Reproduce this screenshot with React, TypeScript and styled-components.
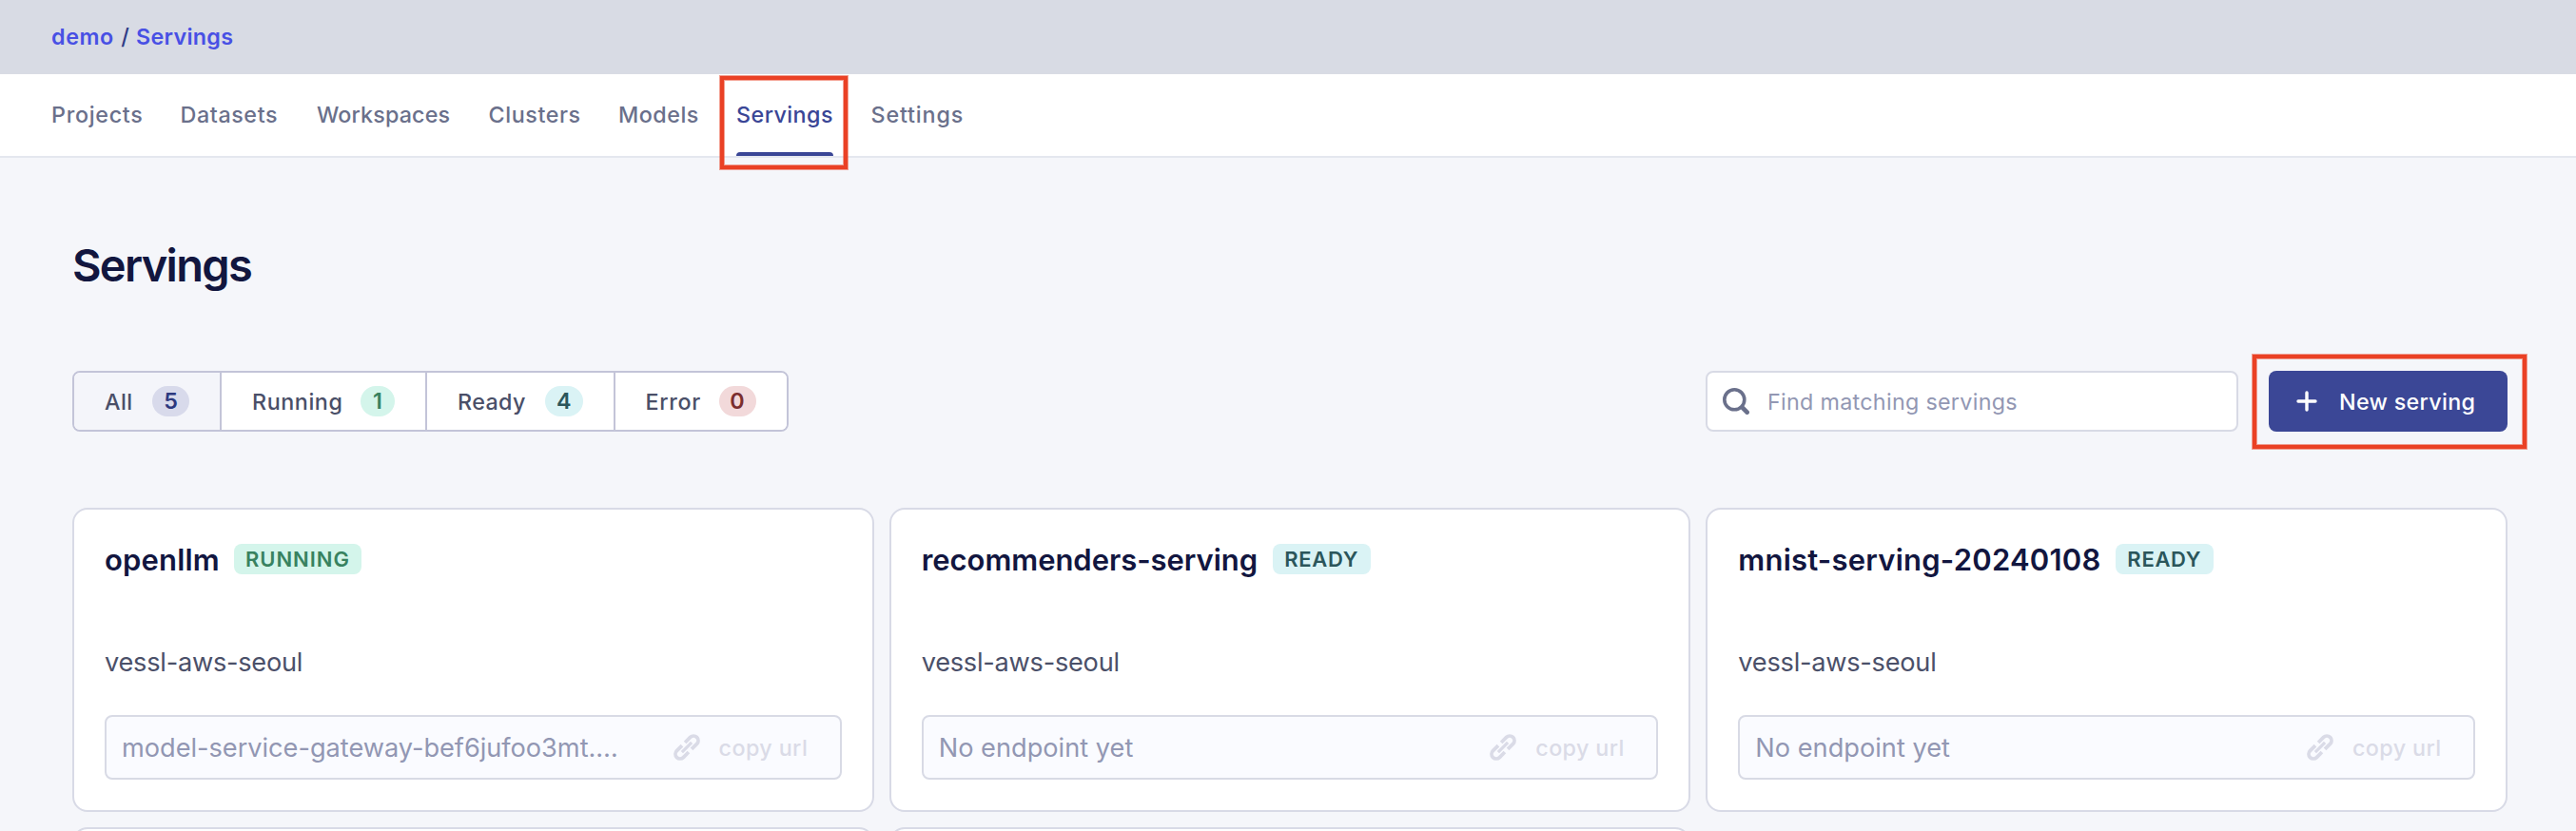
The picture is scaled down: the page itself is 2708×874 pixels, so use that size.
import React from "react";
import styled, { createGlobalStyle } from "styled-components";

const GlobalStyle = createGlobalStyle`
  * { box-sizing: border-box; }
  body {
    margin: 0;
    background: #f5f6fa;
    font-family: Inter, "Liberation Sans", sans-serif;
    -webkit-font-smoothing: antialiased;
  }
`;

const Page = styled.div`
  height: 874px;
  overflow: hidden;
  display: flex;
  flex-direction: column;
  font-size: 23.3px;
  white-space: nowrap;
`;

const Breadcrumb = styled.header`
  height: 78px;
  flex: none;
  display: flex;
  align-items: center;
  padding: 0 0 2px 54px;
  background: #d8dbe4;
  color: #2f3c86;
  font-weight: 500;
`;

const Crumb = styled.a<{ $spacing: number; $width: number }>`
  width: ${(p) => p.$width}px;
  color: #4850e4;
  font-weight: 600;
  letter-spacing: ${(p) => p.$spacing}px;
`;

const Slash = styled.span`
  width: 23px;
  text-align: center;
`;

const Nav = styled.nav`
  height: 88px;
  flex: none;
  display: flex;
  gap: 40px;
  padding-left: 54px;
  background: #ffffff;
  border-bottom: 2px solid #e4e7ef;
`;

const NavItem = styled.a<{ $width: number; $spacing: number; $active?: boolean }>`
  position: relative;
  width: ${(p) => p.$width}px;
  display: flex;
  align-items: center;
  padding-top: 2px;
  border-bottom: 4px solid transparent;
  font-weight: 500;
  letter-spacing: ${(p) => p.$spacing}px;
  color: ${(p) => (p.$active ? "#3a4696" : "#6a708b")};
`;

const Underline = styled.span`
  position: absolute;
  left: 0;
  right: 0;
  bottom: -4px;
  height: 4px;
  border-radius: 4px 4px 0 0;
  background: #3a4696;
`;

const Highlight = styled.span<{ $left: number; $top: number; $width: number; $height: number }>`
  position: absolute;
  z-index: 2;
  left: ${(p) => p.$left}px;
  top: ${(p) => p.$top}px;
  width: ${(p) => p.$width}px;
  height: ${(p) => p.$height}px;
  border: 4px solid #ea4125;
  box-shadow: 0 0 0 1px rgba(234, 65, 37, 0.5), inset 0 0 0 1px rgba(234, 65, 37, 0.5);
  pointer-events: none;
`;

const Main = styled.main`
  flex: 1;
  padding: 83px 72px 0 76px;
`;

const Title = styled.h1`
  margin: 0 0 81px;
  font-size: 47px;
  line-height: 60px;
  font-weight: 600;
  letter-spacing: -1.7px;
  color: #12163f;
`;

const Toolbar = styled.div`
  display: flex;
  justify-content: space-between;
  height: 64px;
  margin-bottom: 80px;
`;

const Filters = styled.div`
  display: flex;
  overflow: hidden;
  border: 2px solid #c3c4d8;
  border-radius: 8px;
  background: #ffffff;
`;

const Filter = styled.button<{ $width: number; $spacing: number; $selected?: boolean }>`
  width: ${(p) => p.$width}px;
  display: flex;
  align-items: center;
  justify-content: space-between;
  padding: 0 32px;
  border: 0;
  background: ${(p) => (p.$selected ? "#f4f5fa" : "#ffffff")};
  color: #4a4f68;
  font: inherit;
  font-weight: 500;
  letter-spacing: ${(p) => p.$spacing}px;

  & + & {
    border-left: 2px solid #c3c4d8;
  }
`;

const Count = styled.span<{ $width: number; $bg: string; $color: string }>`
  width: ${(p) => p.$width}px;
  height: 32px;
  border-radius: 16px;
  line-height: 32px;
  text-align: center;
  letter-spacing: 0;
  font-weight: 600;
  background: ${(p) => p.$bg};
  color: ${(p) => p.$color};
`;

const Actions = styled.div`
  display: flex;
  gap: 32px;
`;

const Search = styled.label`
  width: 560px;
  display: flex;
  align-items: center;
  gap: 19px;
  padding-left: 16px;
  border: 2px solid #d8dae5;
  border-radius: 8px;
  background: #ffffff;
  color: #9297b3;
  letter-spacing: 0.3px;
`;

const NewButton = styled.button`
  position: relative;
  width: 251px;
  display: flex;
  align-items: center;
  gap: 23px;
  padding: 0 0 0 29px;
  border: 0;
  border-radius: 8px;
  background: #3b4796;
  color: #ffffff;
  font: inherit;
  font-weight: 500;
  letter-spacing: 0.32px;
`;

const Grid = styled.div`
  display: grid;
  grid-template-columns: repeat(3, 1fr);
  gap: 16px;
`;

const Card = styled.article`
  height: 320px;
  min-width: 0;
  padding: 32px;
  border: 2px solid #d8dae6;
  border-radius: 16px;
  background: #ffffff;
`;

const CardHead = styled.div`
  display: flex;
  align-items: center;
  gap: 16px;
  height: 40px;
`;

const CardName = styled.h2<{ $spacing: number; $width: number }>`
  margin: 0;
  padding-top: 2px;
  width: ${(p) => p.$width}px;
  font-size: 31px;
  line-height: 40px;
  font-weight: 600;
  letter-spacing: ${(p) => p.$spacing}px;
  color: #12163f;
`;

const Status = styled.span<{ $running?: boolean }>`
  width: ${(p) => (p.$running ? 134 : 103)}px;
  height: 32px;
  border-radius: 8px;
  line-height: 32px;
  padding-left: 12px;
  font-size: 22px;
  font-weight: 600;
  letter-spacing: ${(p) => (p.$running ? 0.95 : 0.7)}px;
  background: ${(p) => (p.$running ? "#d4f5eb" : "#daf3f5")};
  color: ${(p) => (p.$running ? "#388260" : "#2b565b")};
`;

const Cluster = styled.p`
  margin: 69px 0 35px;
  font-size: 27.2px;
  line-height: 40px;
  letter-spacing: -0.25px;
  color: #4b5069;
`;

const Endpoint = styled.div`
  height: 68px;
  display: flex;
  align-items: center;
  padding: 0 33.5px 0 16px;
  border: 2px solid #d8dae5;
  border-radius: 8px;
  background: #fafbff;
`;

const Url = styled.span<{ $spacing: number }>`
  flex: 1;
  font-size: 27.2px;
  letter-spacing: ${(p) => p.$spacing}px;
  color: #9297b3;
`;

const Copy = styled.span`
  display: flex;
  align-items: center;
  gap: 20px;
  font-weight: 500;
  letter-spacing: 0.4px;
  color: #dadbe7;
`;

const SearchIcon = () => (
  <svg width="28" height="28" viewBox="0 0 28 28" fill="none" stroke="#6a708b">
    <circle cx="12.3" cy="12.3" r="10.5" strokeWidth="3.6" />
    <path d="M20.4 20.4L25.6 25.6" strokeWidth="4.8" strokeLinecap="round" />
  </svg>
);

const PlusIcon = () => (
  <svg width="22" height="22" viewBox="0 0 22 22" fill="none" stroke="#fff" strokeWidth="3.4" strokeLinecap="round">
    <path d="M11 2V20M2 11H20" />
  </svg>
);

const LinkIcon = () => (
  <svg width="28" height="28" viewBox="-14 -14 28 28" fill="none" stroke="currentColor" strokeWidth="3.8">
    <g transform="rotate(-45)">
      <path d="M-2.2 -4.9H-10A4.9 4.9 0 0 0 -10 4.9H-2.2" />
      <path d="M2.2 -4.9H10A4.9 4.9 0 0 1 10 4.9H2.2" />
      <path d="M-7.2 0H7.2" strokeWidth="3.2" />
    </g>
  </svg>
);

const navItems = [
  { label: "Projects", width: 95.5, spacing: 0.7 },
  { label: "Datasets", width: 103.5, spacing: 0.6 },
  { label: "Workspaces", width: 140.5, spacing: 0.15 },
  { label: "Clusters", width: 96.5, spacing: 0.6 },
  { label: "Models", width: 84, spacing: 0.5 },
  { label: "Servings", width: 101.5, spacing: 0.45, active: true },
  { label: "Settings", width: 97, spacing: 0.85 },
];

const filters = [
  { label: "All", count: 5, width: 153, badge: 39, spacing: 0.4, bg: "#d8daeb", color: "#2d397f", selected: true },
  { label: "Running", count: 1, width: 216, badge: 36, spacing: 0.57, bg: "#d4f5eb", color: "#388260" },
  { label: "Ready", count: 4, width: 197.5, badge: 39.5, spacing: 0.35, bg: "#daf3f5", color: "#2b565b" },
  { label: "Error", count: 0, width: 182, badge: 39, spacing: 0.67, bg: "#f2d9da", color: "#7b2e2e" },
];

const servings = [
  { name: "openllm", width: 120, spacing: 0.18, running: true, url: "model-service-gateway-bef6jufoo3mt.…", urlSpacing: -0.03 },
  { name: "recommenders-serving", width: 353.5, spacing: -0.04, url: "No endpoint yet", urlSpacing: 0 },
  { name: "mnist-serving-20240108", width: 381, spacing: 0.22, url: "No endpoint yet", urlSpacing: 0 },
];

export default function App() {
  return (
    <Page>
      <GlobalStyle />
      <Breadcrumb>
        <Crumb $spacing={0.6} $width={66}>demo</Crumb>
        <Slash>/</Slash>
        <Crumb $spacing={0.3} $width={104}>Servings</Crumb>
      </Breadcrumb>
      <Nav>
        {navItems.map((n) => (
          <NavItem key={n.label} $width={n.width} $spacing={n.spacing} $active={n.active}>
            {n.label}
            {n.active && (
              <>
                <Underline />
                <Highlight $left={-17} $top={2} $width={134} $height={98} />
              </>
            )}
          </NavItem>
        ))}
      </Nav>
      <Main>
        <Title>Servings</Title>
        <Toolbar>
          <Filters>
            {filters.map((f) => (
              <Filter key={f.label} $width={f.width} $spacing={f.spacing} $selected={f.selected}>
                {f.label}
                <Count $width={f.badge} $bg={f.bg} $color={f.color}>
                  {f.count}
                </Count>
              </Filter>
            ))}
          </Filters>
          <Actions>
            <Search>
              <SearchIcon />
              Find matching servings
            </Search>
            <NewButton>
              <PlusIcon />
              New serving
              <Highlight $left={-17} $top={-17} $width={288} $height={99} />
            </NewButton>
          </Actions>
        </Toolbar>
        <Grid>
          {servings.map((s) => (
            <Card key={s.name}>
              <CardHead>
                <CardName $width={s.width} $spacing={s.spacing}>
                  {s.name}
                </CardName>
                <Status $running={s.running}>{s.running ? "RUNNING" : "READY"}</Status>
              </CardHead>
              <Cluster>vessl-aws-seoul</Cluster>
              <Endpoint>
                <Url $spacing={s.urlSpacing}>{s.url}</Url>
                <Copy>
                  <LinkIcon />
                  copy url
                </Copy>
              </Endpoint>
            </Card>
          ))}
          <Card />
          <Card />
        </Grid>
      </Main>
    </Page>
  );
}
